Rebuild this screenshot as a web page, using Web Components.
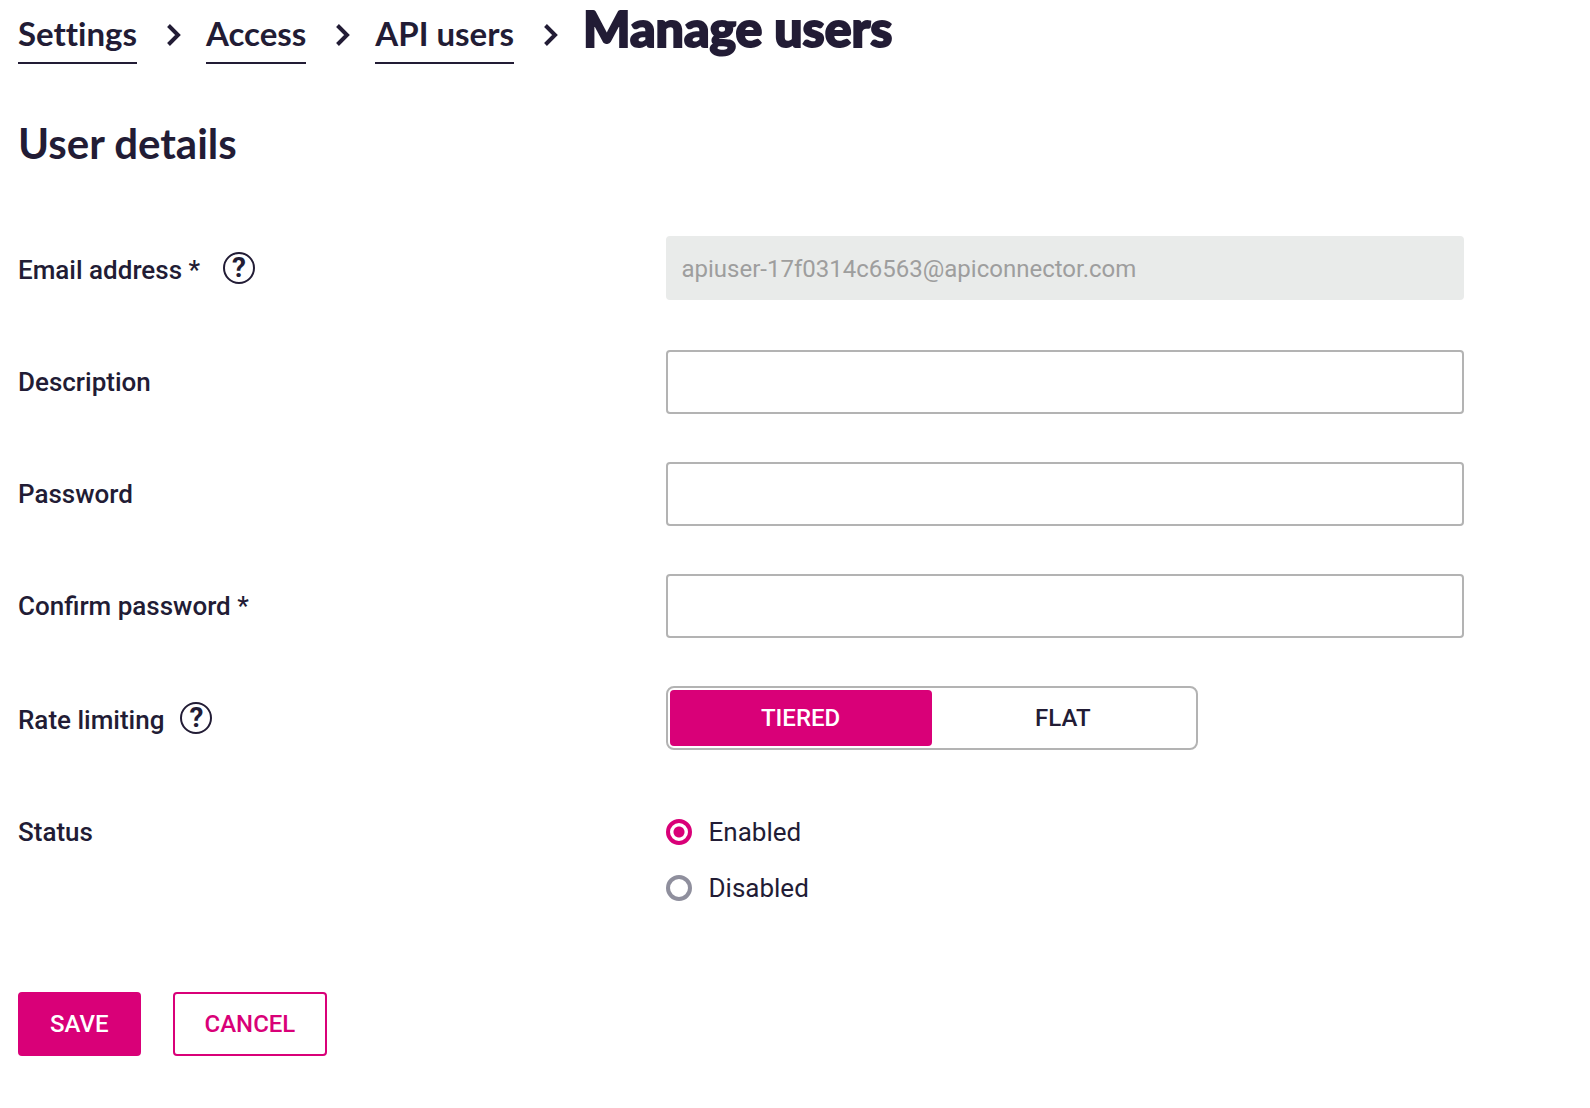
<!DOCTYPE html>
<html lang="en">
<head>
<meta charset="utf-8">
<title>Manage users</title>
<meta name="viewport" content="width=device-width, initial-scale=1">
<style>
  :root { --ink: #221c35; --brand: #d90078; --line: #b3b3b3; --heading: Lato, "Open Sans", sans-serif; }
  body { margin: 0; background: #fff; color: var(--ink); font-family: Roboto, "Liberation Sans", sans-serif; font-size: 26px; line-height: 32px; }
</style>
</head>
<body>
<manage-users-page></manage-users-page>

<script>
const rowStyles = `
  :host { display: block; }
  fieldset { border: 0; margin: 0; padding: 0; min-width: 0; }
  .row { display: grid; grid-template-columns: 5fr 7fr; align-items: start; }
  .name { display: flex; align-items: center; gap: 16px; min-height: 64px; font-weight: 500; }
  :host([help]) .name { min-height: 66px; }
  :host([help]) .text { padding-top: 2px; }
  help-button { margin-bottom: 2px; }
  :host([required]) help-button { margin-left: 7px; }
  .control { width: 88.1%; }
`;

function define(name, render) {
  customElements.define(name, class extends HTMLElement {
    connectedCallback() {
      if (this.shadowRoot) return;
      this.attachShadow({ mode: 'open' }).innerHTML = render(this);
    }
  });
}

const help = el => el.hasAttribute('help') ? '<help-button></help-button>' : '';

define('help-button', () => `
  <style>
    :host { display: flex; }
    button { width: 32px; height: 32px; padding: 0; border: 2px solid var(--ink); border-radius: 50%; background: none;
      color: var(--ink); font: 700 28px/28px Roboto, sans-serif; text-align: center; cursor: pointer; }
  </style>
  <button type="button" aria-label="Help">?</button>`);

define('crumb-link', el => `
  <style>
    :host { display: flex; align-items: flex-start; }
    a { display: block; padding: 13px 0 9px; border-bottom: 2px solid var(--ink); color: var(--ink);
      font: 700 33px/40px var(--heading); font-variant-ligatures: none; text-decoration: none; white-space: nowrap; }
    svg { display: block; width: 16px; height: 24px; margin: 23px 24px 0 29px; fill: none; stroke: var(--ink); stroke-width: 4; }
  </style>
  <a href="${el.getAttribute('href')}"><slot></slot></a>
  <svg viewBox="0 0 16 24" aria-hidden="true"><path d="M2.5 2.5 L12 12 L2.5 21.500"/></svg>`);

define('crumb-trail', () => `
  <style>
    :host { display: block; }
    nav { display: flex; align-items: flex-start; }
    ::slotted(h1) { margin: 0; font: 900 50px/56px var(--heading); -webkit-text-stroke: 2px var(--ink); white-space: nowrap; }
  </style>
  <nav aria-label="Breadcrumb"><slot></slot></nav>`);

define('text-field', el => `
  <style>${rowStyles}
    input { box-sizing: border-box; height: 64px; margin: 0; padding: 2px 14px 0; border: 2px solid var(--line); border-radius: 4px;
      background: #fff; color: var(--ink); font: 400 24px/32px Roboto, sans-serif; }
    input:disabled { background: #e9ebea; border-color: #e9ebea; color: #9e9e9e; }
  </style>
  <div class="row">
    <div class="name"><label class="text" for="field">${el.getAttribute('label')}</label>${help(el)}</div>
    <input class="control" id="field" type="${el.getAttribute('type') || 'text'}" value="${el.getAttribute('value') || ''}" ${el.hasAttribute('disabled') ? 'disabled' : ''}>
  </div>`);

define('segmented-field', el => `
  <style>${rowStyles}
    .track { box-sizing: border-box; display: grid; grid-template-columns: 1fr 1fr; width: 66.667%; height: 64px; padding: 2px;
      border: 2px solid var(--line); border-radius: 8px; }
    label { display: flex; align-items: center; justify-content: center; border-radius: 4px; font-size: 24px; font-weight: 500; cursor: pointer; }
    label:has(:checked) { background: var(--brand); color: #fff; }
    label:has(:focus-visible) { outline: 2px solid var(--ink); }
    input { appearance: none; width: 0; height: 0; margin: 0; outline: 0; }
  </style>
  <fieldset aria-labelledby="name">
    <div class="row">
      <div class="name"><span class="text" id="name">${el.getAttribute('label')}</span>${help(el)}</div>
      <div class="control"><div class="track">
        ${el.getAttribute('options').split(',').map((o, i) => `<label><input type="radio" name="choice" ${i ? '' : 'checked'}>${o}</label>`).join('')}
      </div></div>
    </div>
  </fieldset>`);

define('radio-field', el => `
  <style>${rowStyles}
    .control { padding-top: 4px; }
    label { display: flex; align-items: center; gap: 17px; height: 56px; cursor: pointer; }
    input { appearance: none; box-sizing: border-box; width: 26px; height: 26px; margin: 0; border: 4px solid #8f8f9d; border-radius: 50%; background: #fff; }
    input:checked { border-color: var(--brand); background: radial-gradient(circle, var(--brand) 0 5px, #fff 6px); }
  </style>
  <fieldset aria-labelledby="name">
    <div class="row">
      <div class="name"><span id="name">${el.getAttribute('label')}</span></div>
      <div class="control">
        ${el.getAttribute('options').split(',').map((o, i) => `<label><input type="radio" name="choice" ${i ? '' : 'checked'}>${o}</label>`).join('')}
      </div>
    </div>
  </fieldset>`);

define('action-button', () => `
  <style>
    :host { display: block; }
    button { height: 64px; padding: 0 30px; border: 2px solid var(--brand); border-radius: 4px; background: #fff; color: var(--brand);
      font: 500 24px/32px Roboto, sans-serif; cursor: pointer; }
    :host([primary]) button { background: var(--brand); color: #fff; }
  </style>
  <button type="button"><slot></slot></button>`);

define('manage-users-page', () => `
  <style>
    :host { display: block; padding: 0 18px 52px; }
    h2 { margin: 56px 0 0; font: 700 42px/46px var(--heading); }
    form { display: flex; flex-direction: column; gap: 48px; margin-top: 70px; }
    .actions { display: flex; gap: 32px; margin-top: 28px; }
  </style>
  <crumb-trail>
    <crumb-link href="#settings">Settings</crumb-link>
    <crumb-link href="#access">Access</crumb-link>
    <crumb-link href="#api-users">API users</crumb-link>
    <h1>Manage users</h1>
  </crumb-trail>
  <main>
    <h2>User details</h2>
    <form>
      <text-field label="Email address *" help required disabled value="apiuser-17f0314c6563@apiconnector.com"></text-field>
      <text-field label="Description"></text-field>
      <text-field label="Password" type="password"></text-field>
      <text-field label="Confirm password *" type="password"></text-field>
      <segmented-field label="Rate limiting" help options="TIERED,FLAT"></segmented-field>
      <radio-field label="Status" options="Enabled,Disabled"></radio-field>
      <div class="actions">
        <action-button primary>SAVE</action-button>
        <action-button>CANCEL</action-button>
      </div>
    </form>
  </main>`);
</script>
</body>
</html>
